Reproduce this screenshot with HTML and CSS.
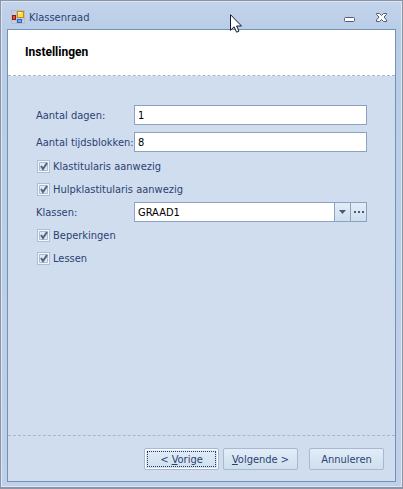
FILE: index.html
```html
<!DOCTYPE html>
<html lang="nl">
<head>
  <meta charset="UTF-8" />
  <title>Klassenraad</title>
  <link rel="stylesheet" href="styles.css">
</head>
<body>

<div class="window">
  <!-- Title bar -->
  <div class="titlebar">
    <svg class="app-icon" width="14" height="14" viewBox="0 0 14 14" shape-rendering="crispEdges">
      <path d="M.5 .5h13v13H.5zM5.500 .5v13M.5 9.500h13" fill="none" stroke="#b9bfc9" />
      <rect x="1" y="5" width="4" height="5" fill="#8c1d10" />
      <rect x="2" y="6" width="2" height="3" fill="#e8503a" />
      <rect x="6" y="1" width="7" height="7" fill="#c58a0a" />
      <rect x="7" y="2" width="5" height="5" fill="#ffd84f" />
      <rect x="7" y="2" width="3" height="2" fill="#fff0a8" />
      <rect x="6" y="9" width="5" height="4" fill="#2f62c4" />
      <rect x="7" y="10" width="3" height="2" fill="#72a5f5" />
    </svg>
    <span class="title">Klassenraad</span>
    <button class="caption-btn" aria-label="Minimaliseren">
      <svg width="11" height="11" viewBox="0 0 11 11">
        <rect x=".5" y="5.500" width="10" height="4" rx="1" fill="#fff" stroke="#525a78" />
      </svg>
    </button>
    <button class="caption-btn" aria-label="Sluiten">
      <svg width="11" height="11" viewBox="0 0 11 11">
        <path d="M.5 1.500h3l2 2 2-2h3v1L8 5l2.500 3v1.500h-3l-2-2-2 2h-3V8L3 5 .5 2.500z" fill="#fff" stroke="#525a78" />
      </svg>
    </button>
    <svg class="cursor" width="13" height="20" viewBox="0 0 13 20">
      <path d="M.5 .7v15.600l3.600-3.500 2.500 5.400 2.400-1.100-2.400-5.100h4.900z" fill="#fff" stroke="#101830" />
    </svg>
  </div>

  <form class="wizard">
    <header>
      <h1>Instellingen</h1>
    </header>

    <!-- Settings -->
    <div class="settings">
      <div class="row">
        <label for="dagen">Aantal dagen:</label>
        <input class="field" id="dagen" type="text" value="1">
      </div>
      <div class="row">
        <label for="blokken">Aantal tijdsblokken:</label>
        <input class="field" id="blokken" type="text" value="8">
      </div>
      <div class="options">
        <label class="check"><input type="checkbox" checked>Klastitularis aanwezig</label>
        <label class="check"><input type="checkbox" checked>Hulpklastitularis aanwezig</label>
        <div class="row">
          <label for="klassen">Klassen:</label>
          <div class="combo">
            <input id="klassen" type="text" value="GRAAD1">
            <button type="button" aria-label="Openen">
              <svg width="7" height="4" viewBox="0 0 7 4"><path d="M0 0h7L3.500 4z" fill="#4b587c" /></svg>
            </button>
            <button type="button" aria-label="Bladeren">
              <svg width="10" height="2" viewBox="0 0 10 2"><path d="M0 0h2v2H0zM4 0h2v2H4zM8 0h2v2H8z" fill="#4b587c" /></svg>
            </button>
          </div>
        </div>
        <label class="check"><input type="checkbox" checked>Beperkingen</label>
        <label class="check"><input type="checkbox" checked>Lessen</label>
      </div>
    </div>

    <footer>
      <button type="button" class="btn focused">&lt; <u>V</u>orige</button>
      <button type="button" class="btn"><u>V</u>olgende &gt;</button>
      <button type="button" class="btn cancel">Annuleren</button>
    </footer>
  </form>
</div>

</body>
</html>
```
FILE: styles.css
```css
* {
  box-sizing: border-box;
}

body {
  margin: 0;
  font-family: Tahoma, "DejaVu Sans Condensed", "DejaVu Sans", sans-serif;
  font-size: 11px;
  color: #2b4272;
}

input, button {
  font: inherit;
  color: inherit;
  margin: 0;
}

.window {
  display: flex;
  flex-direction: column;
  min-height: 100vh;
  padding: 0 5px 5px;
  border: 1px solid #8c94a6;
  border-width: 1px 1px 2px;
  box-shadow: inset 0 0 0 1px #dce7f6;
  background: linear-gradient(#c3d4eb, #b9cde7 30px, #bfd1e9);
}

/* Title bar */
.titlebar {
  position: relative;
  display: flex;
  align-items: center;
  height: 28px;
  padding: 4px 10px 0 5px;
}

.title {
  flex: 1;
  margin-left: 4px;
}

.caption-btn {
  display: flex;
  padding: 0;
  margin-left: 21px;
  border: none;
  background: none;
}

.cursor {
  position: absolute;
  left: 57%;
  top: 13px;
  margin-left: 1px;
  z-index: 1;
}

.wizard {
  flex: 1;
  display: flex;
  flex-direction: column;
  margin: 0 1px;
  border: 1px solid #7490b5;
  background: #d0ddee;
}

header {
  padding: 14px 17px;
  background: #fff;
}

h1 {
  margin: 0;
  font-family: Tahoma, Roboto, sans-serif;
  font-size: 12px;
  line-height: 17px;
  color: #000;
}

/* Settings */
.settings {
  flex: 1;
  padding: 29px 28px 0;
}

header, .settings {
  border-bottom: 1px dashed #a9b6ca;
}

.row {
  display: grid;
  grid-template-columns: 98px 1fr;
  align-items: center;
  height: 20px;
  white-space: nowrap;
}

.row + .row {
  margin-top: 7px;
}

.field, .combo {
  width: 100%;
  height: 20px;
  border: 1px solid #8ba2c1;
  background: #fff;
}

.field, .combo input {
  min-width: 0;
  padding: 0 3px;
  color: #000;
}

.options {
  display: grid;
  gap: 3px;
  margin-top: 4px;
}

.check {
  display: flex;
  align-items: center;
  height: 20px;
}

.check input {
  appearance: none;
  width: 13px;
  height: 13px;
  margin: 0 3px 0 1px;
  border: 1px solid #a9bfdf;
  background: url("data:image/svg+xml,%3Csvg xmlns='http://www.w3.org/2000/svg' viewBox='0 0 11 11'%3E%3Cpath d='M1.500 1.500h8v8h-8z' fill='%23e3e7ec' stroke='%23b4b9c2'/%3E%3Cpath d='M3 5l2 3 4-6' fill='none' stroke='%23476592' stroke-width='2'/%3E%3C/svg%3E") #f4f6f9;
}

.combo {
  display: flex;
}

.combo input {
  flex: 1;
  border: none;
}

.combo button {
  display: flex;
  align-items: center;
  justify-content: center;
  width: 16px;
  padding: 0;
  border: none;
  border-left: 1px solid #8ba2c1;
  background: linear-gradient(#e3edf8, #cfdeed);
}

/* Buttons */
footer {
  display: flex;
  justify-content: flex-end;
  gap: 4px;
  padding: 12px 11px 11px;
}

.btn {
  width: 75px;
  height: 22px;
  padding: 0;
  border: 1px solid #a9b8d1;
  border-radius: 2px;
  background: linear-gradient(#e2edf8, #cfdfed);
  white-space: nowrap;
}

.focused {
  box-shadow: inset 0 0 0 1px #fff;
  outline: 1px dotted #20396d;
  outline-offset: -4px;
}

.cancel {
  margin-left: 7px;
}
```
